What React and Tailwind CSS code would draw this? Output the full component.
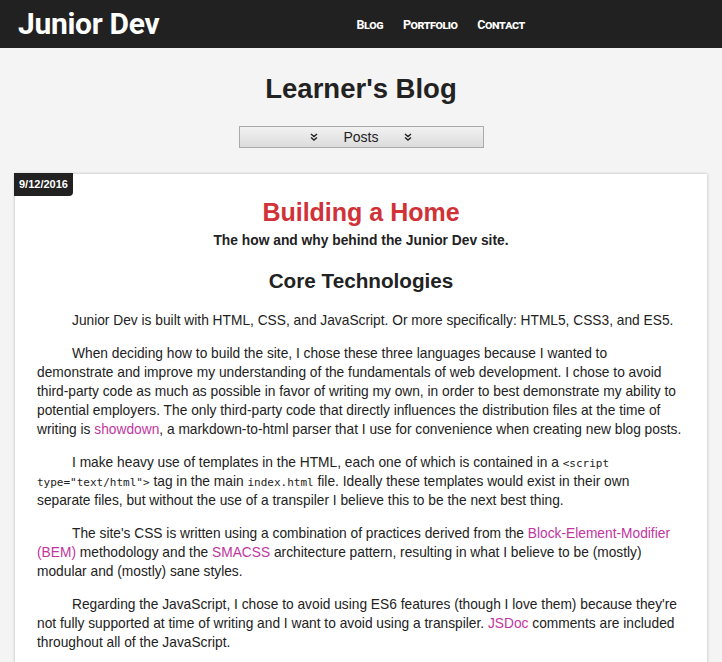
import { useState } from "react";

const links = ["Blog", "Portfolio", "Contact"];

function Chevrons() {
  return (
    <svg width="8" height="8" viewBox="0 0 8 8" className="text-[#222]">
      <path d="M1 1 L4 3.5 L7 1 M1 4.5 L4 7 L7 4.5" fill="none" stroke="currentColor" strokeWidth="1.4" />
    </svg>
  );
}

function A({ children }) {
  return <a href="#" className="text-[#c2359e]">{children}</a>;
}

function Code({ children }) {
  return <code className="font-['DejaVu_Sans_Mono',monospace] text-[11px] leading-none">{children}</code>;
}

export default function App() {
  const [open, setOpen] = useState(false);

  return (
    <div className="min-h-[662px] bg-[#f4f4f4] font-['Liberation_Sans',Arial,sans-serif] text-[#222]">
      <header className="flex h-12 items-center bg-[#212121] pl-[18px]">
        <div className="font-['Roboto',sans-serif] text-[30px] font-bold leading-none tracking-[-0.3px] text-white">
          Junior Dev
        </div>
        <nav className="flex flex-1 justify-center gap-5 pt-[3px]">
          {links.map((l) => (
            <a key={l} href="#" className="font-['Roboto',sans-serif] text-[12.5px] font-bold text-white [font-variant:small-caps] tracking-[-0.5px]">
              {l}
            </a>
          ))}
        </nav>
      </header>

      <h1 className="mt-[27px] text-center text-[27.5px] font-bold leading-none">Learner's Blog</h1>

      <div className="mt-[23px] flex justify-center">
        <button
          onClick={() => setOpen(!open)}
          className="flex h-[22px] w-[245px] items-center justify-center gap-[25px] border border-[#aaa] bg-gradient-to-b from-[#f2f2f2] to-[#dcdcdc] text-[14px] leading-none"
        >
          <Chevrons />
          <span>Posts</span>
          <Chevrons />
        </button>
      </div>

      <article className="relative mx-[15px] mt-[25px] border-t border-[#ddd] bg-white px-[22px] pb-6 pt-[26px] shadow-[0_1px_3px_rgba(0,0,0,0.25)]">
        <div className="absolute -left-px -top-px rounded-br-[4px] bg-[#212121] px-[5px] py-[6px] text-[11px] font-bold leading-none text-white">
          9/12/2016
        </div>
        <h2 className="text-center text-[25px] font-semibold leading-none text-[#d03237]">Building a Home</h2>
        <p className="mt-[9px] text-center text-[13.8px] font-bold leading-none">The how and why behind the Junior Dev site.</p>
        <h3 className="mt-[24px] text-center text-[20.7px] font-bold leading-none">Core Technologies</h3>

        <div className="mt-[19px] space-y-[14px] text-[13.75px] leading-[19px]">
          <p className="indent-[35px]">
            Junior Dev is built with HTML, CSS, and JavaScript. Or more specifically: HTML5, CSS3, and ES5.
          </p>
          <p className="indent-[35px]">
            When deciding how to build the site, I chose these three languages because I wanted to demonstrate and
            improve my understanding of the fundamentals of web development. I chose to avoid third-party code as much
            as possible in favor of writing my own, in order to best demonstrate my ability to potential employers. The
            only third-party code that directly influences the distribution files at the time of writing is{" "}
            <A>showdown</A>, a markdown-to-html parser that I use for convenience when creating new blog posts.
          </p>
          <p className="indent-[35px]">
            I make heavy use of templates in the HTML, each one of which is contained in a{" "}
            <Code>{'<script type="text/html">'}</Code> tag in the main <Code>index.html</Code> file. Ideally these
            templates would exist in their own separate files, but without the use of a transpiler I believe this to be
            the next best thing.
          </p>
          <p className="indent-[35px]">
            The site's CSS is written using a combination of practices derived from the{" "}
            <A>Block-Element-Modifier (BEM)</A> methodology and the <A>SMACSS</A> architecture pattern, resulting in
            what I believe to be (mostly) modular and (mostly) sane styles.
          </p>
          <p className="indent-[35px]">
            Regarding the JavaScript, I chose to avoid using ES6 features (though I love them) because they're not
            fully supported at time of writing and I want to avoid using a transpiler. <A>JSDoc</A> comments are
            included throughout all of the JavaScript.
          </p>
        </div>
      </article>
    </div>
  );
}
